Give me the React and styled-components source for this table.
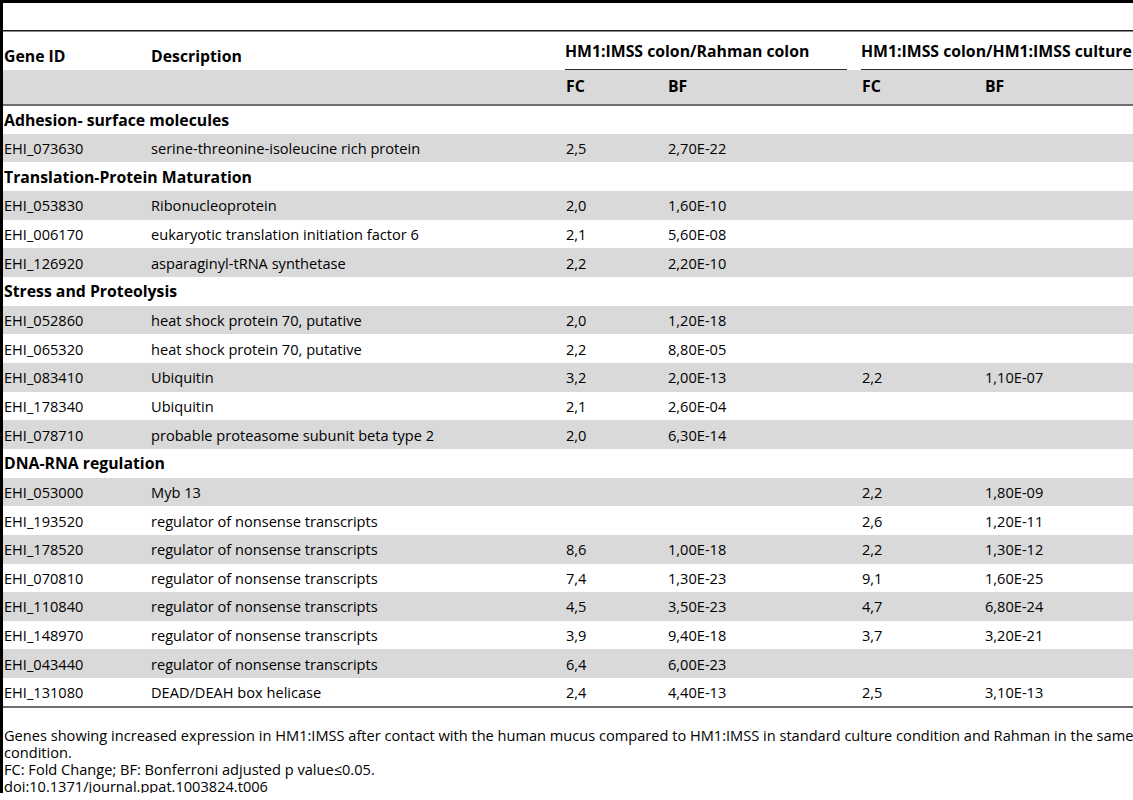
import React from 'react'
import styled, { createGlobalStyle } from 'styled-components'

const GlobalStyle = createGlobalStyle`
    html, body {
        margin: 0;
        padding: 0;
        background: #ffffff;
        overflow: hidden;
    }
    body {
        font-family: "Open Sans", "DejaVu Sans", sans-serif;
        color: #000;
    }
`;

const Frame = styled.div`
    width: 1160px;
    height: 790px;
    border-left: 3px solid #000;
    border-top: 3px solid #000;
    box-sizing: content-box;
`;

const TitleGap = styled.div`
    height: 27px;
    border-bottom: 1px solid #1a1a1a;
    box-shadow: 0 1px 0 #8a8a8a;
`;

const Table = styled.table`
    width: 100%;
    border-collapse: collapse;
    table-layout: fixed;
    font-size: 14.6px;
`;

const HeadCell = styled.th`
    text-align: left;
    font-weight: 700;
    font-size: 15.8px;
    padding: 0 0 ${p => p.$pb || 0}px 1px;
    vertical-align: bottom;
    white-space: nowrap;
    overflow: hidden;
`;

const HeadRow = styled.tr`
    height: ${p => p.$h}px;
    background: ${p => (p.$shade ? '#d9d9d9' : 'transparent')};
    border-bottom: ${p => (p.$rule ? '2px solid #6f6f6f' : 'none')};
`;

const SubCell = styled(HeadCell)`
    vertical-align: middle;
    padding-bottom: 3px;
`;

const GroupLabel = styled.div`
    padding-bottom: 7px;
    margin-right: ${p => p.$gap}px;
    border-bottom: 1px solid #2b2b2b;
    white-space: nowrap;
`;

const Row = styled.tr`
    height: 28.67px;
    background: ${p => (p.$shade ? '#d9d9d9' : 'transparent')};
    border-bottom: ${p => (p.$last ? '2px solid #6f6f6f' : 'none')};
`;

const Cell = styled.td`
    padding: 0 0 0 1px;
    vertical-align: middle;
    white-space: nowrap;
`;

const Category = styled.td`
    padding: 0 0 0 1px;
    font-weight: 700;
    font-size: 15.8px;
    vertical-align: middle;
    white-space: nowrap;
`;

const Notes = styled.div`
    margin-top: 19px;
    padding-left: 1px;
    font-size: 14.6px;
    line-height: 17px;
`;

const rows = [
    { cat: 'Adhesion- surface molecules' },
    ['EHI_073630', 'serine-threonine-isoleucine rich protein', '2,5', '2,70E-22', '', ''],
    { cat: 'Translation-Protein Maturation' },
    ['EHI_053830', 'Ribonucleoprotein', '2,0', '1,60E-10', '', ''],
    ['EHI_006170', 'eukaryotic translation initiation factor 6', '2,1', '5,60E-08', '', ''],
    ['EHI_126920', 'asparaginyl-tRNA synthetase', '2,2', '2,20E-10', '', ''],
    { cat: 'Stress and Proteolysis' },
    ['EHI_052860', 'heat shock protein 70, putative', '2,0', '1,20E-18', '', ''],
    ['EHI_065320', 'heat shock protein 70, putative', '2,2', '8,80E-05', '', ''],
    ['EHI_083410', 'Ubiquitin', '3,2', '2,00E-13', '2,2', '1,10E-07'],
    ['EHI_178340', 'Ubiquitin', '2,1', '2,60E-04', '', ''],
    ['EHI_078710', 'probable proteasome subunit beta type 2', '2,0', '6,30E-14', '', ''],
    { cat: 'DNA-RNA regulation' },
    ['EHI_053000', 'Myb 13', '', '', '2,2', '1,80E-09'],
    ['EHI_193520', 'regulator of nonsense transcripts', '', '', '2,6', '1,20E-11'],
    ['EHI_178520', 'regulator of nonsense transcripts', '8,6', '1,00E-18', '2,2', '1,30E-12'],
    ['EHI_070810', 'regulator of nonsense transcripts', '7,4', '1,30E-23', '9,1', '1,60E-25'],
    ['EHI_110840', 'regulator of nonsense transcripts', '4,5', '3,50E-23', '4,7', '6,80E-24'],
    ['EHI_148970', 'regulator of nonsense transcripts', '3,9', '9,40E-18', '3,7', '3,20E-21'],
    ['EHI_043440', 'regulator of nonsense transcripts', '6,4', '6,00E-23', '', ''],
    ['EHI_131080', 'DEAD/DEAH box helicase', '2,4', '4,40E-13', '2,5', '3,10E-13'],
];

function App () {
    return (
        <>
            <GlobalStyle />
            <Frame>
                <TitleGap />
                <Table>
                    <colgroup>
                        <col style={{ width: 147 }} />
                        <col style={{ width: 415 }} />
                        <col style={{ width: 102 }} />
                        <col style={{ width: 194 }} />
                        <col style={{ width: 123 }} />
                        <col />
                    </colgroup>
                    <thead>
                        <HeadRow $h={39}>
                            <HeadCell $pb={3}>Gene ID</HeadCell>
                            <HeadCell $pb={3}>Description</HeadCell>
                            <HeadCell colSpan={2} style={{ paddingLeft: 0 }}>
                                <GroupLabel $gap={14}>HM1:IMSS colon/Rahman colon</GroupLabel>
                            </HeadCell>
                            <HeadCell colSpan={2} style={{ paddingLeft: 0 }}>
                                <GroupLabel $gap={0}>HM1:IMSS colon/HM1:IMSS culture</GroupLabel>
                            </HeadCell>
                        </HeadRow>
                        <HeadRow $h={35} $shade $rule>
                            <SubCell />
                            <SubCell />
                            <SubCell>FC</SubCell>
                            <SubCell>BF</SubCell>
                            <SubCell>FC</SubCell>
                            <SubCell>BF</SubCell>
                        </HeadRow>
                    </thead>
                    <tbody>
                        {rows.map((r, i) => {
                            const shade = i % 2 === 1;
                            const last = i === rows.length - 1;
                            if (r.cat) {
                                return (
                                    <Row key={i} $shade={shade} $last={last}>
                                        <Category colSpan={6}>{r.cat}</Category>
                                    </Row>
                                );
                            }
                            return (
                                <Row key={i} $shade={shade} $last={last}>
                                    {r.map((v, j) => <Cell key={j}>{v}</Cell>)}
                                </Row>
                            );
                        })}
                    </tbody>
                </Table>
                <Notes>
                    <div>Genes showing increased expression in HM1:IMSS after contact with the human mucus compared to HM1:IMSS in standard culture condition and Rahman in the same condition.</div>
                    <div>FC: Fold Change; BF: Bonferroni adjusted p value≤0.05.</div>
                    <div>doi:10.1371/journal.ppat.1003824.t006</div>
                </Notes>
            </Frame>
        </>
    )
}

export default App;
